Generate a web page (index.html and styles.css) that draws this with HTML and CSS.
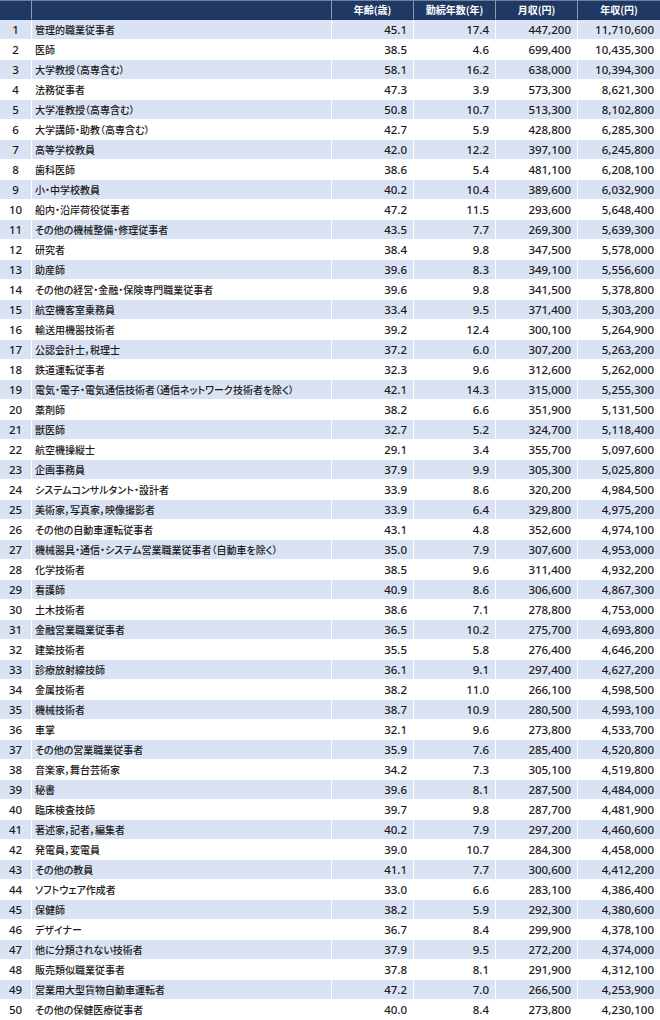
FILE: index.html
```html
<!DOCTYPE html>
<html lang="ja">
<head>
<meta charset="utf-8">
<title>職業別年収ランキング</title>
<link rel="stylesheet" href="styles.css">
</head>
<body>
<table class="ranking">
<colgroup>
<col class="c-rank"><col class="c-name"><col class="c-num"><col class="c-num"><col class="c-num"><col class="c-num">
</colgroup>
<thead>
<tr><th></th><th></th><th>年齢(歳)</th><th>勤続年数(年)</th><th>月収(円)</th><th>年収(円)</th></tr>
</thead>
<tbody>
<tr><td>1</td><td>管理的職業従事者</td><td>45.1</td><td>17.4</td><td>447,200</td><td>11,710,600</td></tr>
<tr><td>2</td><td>医師</td><td>38.5</td><td>4.6</td><td>699,400</td><td>10,435,300</td></tr>
<tr><td>3</td><td>大学教授（高専含む）</td><td>58.1</td><td>16.2</td><td>638,000</td><td>10,394,300</td></tr>
<tr><td>4</td><td>法務従事者</td><td>47.3</td><td>3.9</td><td>573,300</td><td>8,621,300</td></tr>
<tr><td>5</td><td>大学准教授（高専含む）</td><td>50.8</td><td>10.7</td><td>513,300</td><td>8,102,800</td></tr>
<tr><td>6</td><td>大学講師・助教（高専含む）</td><td>42.7</td><td>5.9</td><td>428,800</td><td>6,285,300</td></tr>
<tr><td>7</td><td>高等学校教員</td><td>42.0</td><td>12.2</td><td>397,100</td><td>6,245,800</td></tr>
<tr><td>8</td><td>歯科医師</td><td>38.6</td><td>5.4</td><td>481,100</td><td>6,208,100</td></tr>
<tr><td>9</td><td>小・中学校教員</td><td>40.2</td><td>10.4</td><td>389,600</td><td>6,032,900</td></tr>
<tr><td>10</td><td>船内・沿岸荷役従事者</td><td>47.2</td><td>11.5</td><td>293,600</td><td>5,648,400</td></tr>
<tr><td>11</td><td>その他の機械整備・修理従事者</td><td>43.5</td><td>7.7</td><td>269,300</td><td>5,639,300</td></tr>
<tr><td>12</td><td>研究者</td><td>38.4</td><td>9.8</td><td>347,500</td><td>5,578,000</td></tr>
<tr><td>13</td><td>助産師</td><td>39.6</td><td>8.3</td><td>349,100</td><td>5,556,600</td></tr>
<tr><td>14</td><td>その他の経営・金融・保険専門職業従事者</td><td>39.6</td><td>9.8</td><td>341,500</td><td>5,378,800</td></tr>
<tr><td>15</td><td>航空機客室乗務員</td><td>33.4</td><td>9.5</td><td>371,400</td><td>5,303,200</td></tr>
<tr><td>16</td><td>輸送用機器技術者</td><td>39.2</td><td>12.4</td><td>300,100</td><td>5,264,900</td></tr>
<tr><td>17</td><td>公認会計士，税理士</td><td>37.2</td><td>6.0</td><td>307,200</td><td>5,263,200</td></tr>
<tr><td>18</td><td>鉄道運転従事者</td><td>32.3</td><td>9.6</td><td>312,600</td><td>5,262,000</td></tr>
<tr><td>19</td><td>電気・電子・電気通信技術者（通信ネットワーク技術者を除く）</td><td>42.1</td><td>14.3</td><td>315,000</td><td>5,255,300</td></tr>
<tr><td>20</td><td>薬剤師</td><td>38.2</td><td>6.6</td><td>351,900</td><td>5,131,500</td></tr>
<tr><td>21</td><td>獣医師</td><td>32.7</td><td>5.2</td><td>324,700</td><td>5,118,400</td></tr>
<tr><td>22</td><td>航空機操縦士</td><td>29.1</td><td>3.4</td><td>355,700</td><td>5,097,600</td></tr>
<tr><td>23</td><td>企画事務員</td><td>37.9</td><td>9.9</td><td>305,300</td><td>5,025,800</td></tr>
<tr><td>24</td><td>システムコンサルタント・設計者</td><td>33.9</td><td>8.6</td><td>320,200</td><td>4,984,500</td></tr>
<tr><td>25</td><td>美術家，写真家，映像撮影者</td><td>33.9</td><td>6.4</td><td>329,800</td><td>4,975,200</td></tr>
<tr><td>26</td><td>その他の自動車運転従事者</td><td>43.1</td><td>4.8</td><td>352,600</td><td>4,974,100</td></tr>
<tr><td>27</td><td>機械器具・通信・システム営業職業従事者（自動車を除く）</td><td>35.0</td><td>7.9</td><td>307,600</td><td>4,953,000</td></tr>
<tr><td>28</td><td>化学技術者</td><td>38.5</td><td>9.6</td><td>311,400</td><td>4,932,200</td></tr>
<tr><td>29</td><td>看護師</td><td>40.9</td><td>8.6</td><td>306,600</td><td>4,867,300</td></tr>
<tr><td>30</td><td>土木技術者</td><td>38.6</td><td>7.1</td><td>278,800</td><td>4,753,000</td></tr>
<tr><td>31</td><td>金融営業職業従事者</td><td>36.5</td><td>10.2</td><td>275,700</td><td>4,693,800</td></tr>
<tr><td>32</td><td>建築技術者</td><td>35.5</td><td>5.8</td><td>276,400</td><td>4,646,200</td></tr>
<tr><td>33</td><td>診療放射線技師</td><td>36.1</td><td>9.1</td><td>297,400</td><td>4,627,200</td></tr>
<tr><td>34</td><td>金属技術者</td><td>38.2</td><td>11.0</td><td>266,100</td><td>4,598,500</td></tr>
<tr><td>35</td><td>機械技術者</td><td>38.7</td><td>10.9</td><td>280,500</td><td>4,593,100</td></tr>
<tr><td>36</td><td>車掌</td><td>32.1</td><td>9.6</td><td>273,800</td><td>4,533,700</td></tr>
<tr><td>37</td><td>その他の営業職業従事者</td><td>35.9</td><td>7.6</td><td>285,400</td><td>4,520,800</td></tr>
<tr><td>38</td><td>音楽家，舞台芸術家</td><td>34.2</td><td>7.3</td><td>305,100</td><td>4,519,800</td></tr>
<tr><td>39</td><td>秘書</td><td>39.6</td><td>8.1</td><td>287,500</td><td>4,484,000</td></tr>
<tr><td>40</td><td>臨床検査技師</td><td>39.7</td><td>9.8</td><td>287,700</td><td>4,481,900</td></tr>
<tr><td>41</td><td>著述家，記者，編集者</td><td>40.2</td><td>7.9</td><td>297,200</td><td>4,460,600</td></tr>
<tr><td>42</td><td>発電員，変電員</td><td>39.0</td><td>10.7</td><td>284,300</td><td>4,458,000</td></tr>
<tr><td>43</td><td>その他の教員</td><td>41.1</td><td>7.7</td><td>300,600</td><td>4,412,200</td></tr>
<tr><td>44</td><td>ソフトウェア作成者</td><td>33.0</td><td>6.6</td><td>283,100</td><td>4,386,400</td></tr>
<tr><td>45</td><td>保健師</td><td>38.2</td><td>5.9</td><td>292,300</td><td>4,380,600</td></tr>
<tr><td>46</td><td>デザイナー</td><td>36.7</td><td>8.4</td><td>299,900</td><td>4,378,100</td></tr>
<tr><td>47</td><td>他に分類されない技術者</td><td>37.9</td><td>9.5</td><td>272,200</td><td>4,374,000</td></tr>
<tr><td>48</td><td>販売類似職業従事者</td><td>37.8</td><td>8.1</td><td>291,900</td><td>4,312,100</td></tr>
<tr><td>49</td><td>営業用大型貨物自動車運転者</td><td>47.2</td><td>7.0</td><td>266,500</td><td>4,253,900</td></tr>
<tr><td>50</td><td>その他の保健医療従事者</td><td>40.0</td><td>8.4</td><td>273,800</td><td>4,230,100</td></tr>
</tbody>
</table>
</body>
</html>
```

FILE: styles.css
```css
html, body {
  margin: 0;
  padding: 0;
  background: #ffffff;
}

.ranking {
  width: 660px;
  table-layout: fixed;
  border-collapse: separate;
  border-spacing: 0;
  font-family: "Noto Sans CJK JP", "Noto Sans", sans-serif;
  font-feature-settings: "palt";
  font-size: 10px;
  color: #1a1a1a;
}

.c-rank { width: 32px; }
.c-name { width: 300px; }
.c-num { width: 82px; }

.ranking th,
.ranking td {
  height: 19px;
  padding: 0;
  line-height: 19px;
  border-right: 1px solid #ffffff;
  border-bottom: 1px solid #ffffff;
  white-space: nowrap;
  overflow: hidden;
  box-sizing: content-box;
}

.ranking th:last-child,
.ranking td:last-child {
  border-right: none;
}

.ranking thead th {
  background: #203864;
  color: #ffffff;
  font-weight: 700;
  font-size: 10px;
  text-align: center;
  border-top: 1px solid #6f7f9e;
  height: 18px;
  line-height: 18px;
  border-right-color: #8a9ab8;
  border-bottom-color: #1c3260;
}

.ranking tbody tr:nth-child(odd) td {
  background: #dae3f3;
}

.ranking tbody td {
  text-align: right;
  padding-right: 6px;
  font-family: "Noto Sans", "Noto Sans CJK JP", sans-serif;
  font-size: 11.5px;
  font-weight: 500;
}

.ranking tbody td:first-child {
  text-align: center;
  padding-right: 0;
}

.ranking tbody td:nth-child(2) {
  text-align: left;
  padding-left: 3px;
  padding-right: 0;
  font-family: "Noto Sans CJK JP", sans-serif;
  font-size: 10px;
  font-weight: 500;
}
```
